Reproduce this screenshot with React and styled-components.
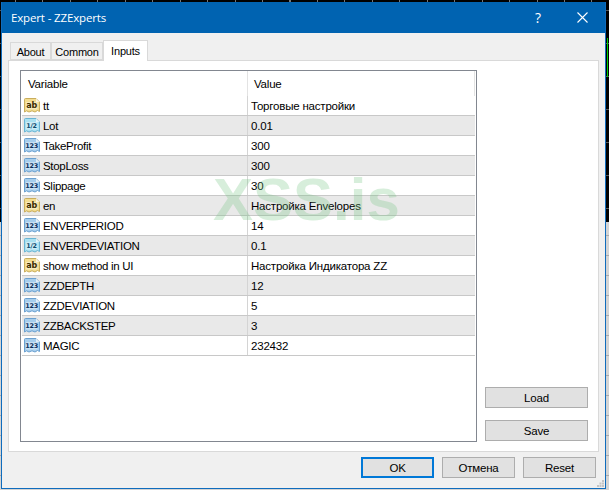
import React from 'react';
import styled, { createGlobalStyle } from 'styled-components';

const GlobalStyle = createGlobalStyle`
  html, body {
    margin: 0;
    padding: 0;
    background: #000;
  }
`;

const rows = [
  { type: 'ab', name: 'tt', value: 'Торговые настройки' },
  { type: 'half', name: 'Lot', value: '0.01' },
  { type: 'num', name: 'TakeProfit', value: '300' },
  { type: 'num', name: 'StopLoss', value: '300' },
  { type: 'num', name: 'Slippage', value: '30' },
  { type: 'ab', name: 'en', value: 'Настройка Envelopes' },
  { type: 'num', name: 'ENVERPERIOD', value: '14' },
  { type: 'half', name: 'ENVERDEVIATION', value: '0.1' },
  { type: 'ab', name: 'show method in UI', value: 'Настройка Индикатора ZZ' },
  { type: 'num', name: 'ZZDEPTH', value: '12' },
  { type: 'num', name: 'ZZDEVIATION', value: '5' },
  { type: 'num', name: 'ZZBACKSTEP', value: '3' },
  { type: 'num', name: 'MAGIC', value: '232432' }
];

const iconColors = {
  ab: { fill: '#f3dc8e', edge: '#c9ad5c', text: '#3a2c00', label: 'ab', size: 8 },
  half: { fill: '#a9e0f0', edge: '#68b4d4', text: '#0b4a6e', label: '1/2', size: 6.5 },
  num: { fill: '#a6cdec', edge: '#6aa0d0', text: '#0c2f5c', label: '123', size: 6.5 }
};

const TypeIcon = ({ type }) => {
  const c = iconColors[type];
  return (
    <IconSvg width="16" height="15" viewBox="0 0 16 15">
      <path
        d="M0.5 1.5 Q0.5 0.5 1.5 0.5 H12 L15.5 4 V13.5 L13.5 12.5 L11 14 L8 12.8 L5 14 L2.5 12.8 L0.5 14 Z"
        fill={c.fill}
        stroke={c.edge}
      />
      <path d="M12 0.5 V4 H15.5 Z" fill="#fff" opacity="0.7" />
      <rect x="2" y="4" width="11.5" height="7.5" fill="#fff" opacity="0.4" />
      <text
        x="7.6"
        y="10.4"
        textAnchor="middle"
        fontFamily="'DejaVu Sans', sans-serif"
        fontWeight="700"
        fontSize={c.size}
        fill={c.text}
      >
        {c.label}
      </text>
    </IconSvg>
  );
};

export default function App() {
  return (
    <Desktop>
      <GlobalStyle />
      <Window>
        <TitleBar>
          <Title>Expert - ZZExperts</Title>
          <HelpMark>?</HelpMark>
          <CloseIcon width="11" height="11" viewBox="0 0 11 11">
            <path d="M0.5 0.5 L10.5 10.5 M10.5 0.5 L0.5 10.5" stroke="#fff" strokeWidth="1.1" />
          </CloseIcon>
        </TitleBar>
        <Body>
          <Tabs>
            <Tab width={41}>About</Tab>
            <Tab width={52}>Common</Tab>
            <Tab width={45} active>
              Inputs
            </Tab>
          </Tabs>
          <Panel>
            <List>
              <Header>
                <HeaderCell>Variable</HeaderCell>
                <HeaderCell>Value</HeaderCell>
              </Header>
              {rows.map((row, i) => (
                <Row key={row.name} shaded={i % 2 === 1}>
                  <NameCell>
                    <TypeIcon type={row.type} />
                    {row.name}
                  </NameCell>
                  <ValueCell>{row.value}</ValueCell>
                </Row>
              ))}
            </List>
            <SideButtons>
              <Button>Load</Button>
              <Button>Save</Button>
            </SideButtons>
          </Panel>
          <Footer>
            <Button small primary>
              OK
            </Button>
            <Button small>Отмена</Button>
            <Button small>Reset</Button>
          </Footer>
        </Body>
        <Grip width="7" height="7" viewBox="0 0 7 7">
          <path d="M5 0h2v2H5zM2.5 2.5h2v2h-2zM5 2.5h2v2H5zM0 5h2v2H0zM2.5 5h2v2h-2zM5 5h2v2H5z" fill="#c4c4c4" />
        </Grip>
        <Watermark>XSS.is</Watermark>
      </Window>
    </Desktop>
  );
}

const Desktop = styled.div`
  width: 609px;
  height: 490px;
  box-sizing: border-box;
  padding: 2px 3px 1px 1px;
  overflow: hidden;
  background:
    linear-gradient(#00d000, #00d000) 607px 38px / 1px 39px no-repeat,
    repeating-linear-gradient(90deg, #777 0 1px, transparent 1px 27.45px) 15px 0 / 100% 2px no-repeat,
    repeating-linear-gradient(#555 0 1px, transparent 1px 33px) 0 10px / 100% 212px no-repeat,
    repeating-linear-gradient(#aaa 0 1px, transparent 1px 20px) 0 235px / 100% 255px no-repeat,
    linear-gradient(#000 0 222px, #d4d4d4 222px);
`;

const Window = styled.div`
  position: relative;
  width: 605px;
  height: 487px;
  box-sizing: border-box;
  border: 1px solid #0f6cbd;
  border-top: 0;
  background: #f0f0f0;
  display: flex;
  flex-direction: column;
  font-family: 'Liberation Sans', Arial, sans-serif;
  font-size: 11.5px;
  color: #000;
`;

const TitleBar = styled.div`
  height: 31px;
  flex: none;
  background: #0063b1;
  color: #fff;
  display: flex;
  align-items: center;
  padding: 0 17px 0 9px;
`;

const Title = styled.div`
  flex: 1;
  font-family: 'Open Sans', sans-serif;
  font-size: 11.5px;
  letter-spacing: -0.15px;
`;

const HelpMark = styled.div`
  font-family: 'Open Sans', sans-serif;
  font-size: 14px;
  margin-right: 36px;
`;

const CloseIcon = styled.svg`
  display: block;
`;

const Body = styled.div`
  flex: 1;
  display: flex;
  flex-direction: column;
  padding: 7px 6px 0 6px;
`;

const Tabs = styled.div`
  display: flex;
  align-items: flex-end;
  height: 20px;
  padding-left: 2px;
  position: relative;
  z-index: 1;
`;

const Tab = styled.div`
  width: ${props => props.width}px;
  height: ${props => (props.active ? 21 : 18)}px;
  box-sizing: border-box;
  margin-bottom: ${props => (props.active ? -1 : 0)}px;
  border: 1px solid #d9d9d9;
  border-bottom: ${props => (props.active ? '0' : '1px solid #d9d9d9')};
  background: ${props => (props.active ? '#fff' : '#f0f0f0')};
  display: flex;
  align-items: center;
  justify-content: center;
  padding-top: ${props => (props.active ? 0 : 1)}px;
  padding-bottom: ${props => (props.active ? 1 : 0)}px;
  font-size: 11px;
  letter-spacing: -0.2px;
`;

const Panel = styled.div`
  height: 392px;
  flex: none;
  box-sizing: border-box;
  border: 1px solid #d9d9d9;
  background: #fff;
  display: flex;
  padding: 9px 10px 9px 11px;
  gap: 8px;
`;

const List = styled.div`
  width: 457px;
  flex: none;
  box-sizing: border-box;
  border: 1px solid #828790;
  padding: 0 1px;
`;

const Header = styled.div`
  display: grid;
  grid-template-columns: 226px 1fr;
  height: 25px;
`;

const HeaderCell = styled.div`
  display: flex;
  align-items: center;
  padding-left: 6px;
  padding-top: 1px;
  border-right: 1px solid #e3e3e3;
  letter-spacing: -0.2px;
`;

const Row = styled.div`
  display: grid;
  grid-template-columns: 226px 1fr;
  height: 20px;
  box-sizing: border-box;
  border-bottom: 1px solid #c8c8c8;
  background: ${props => (props.shaded ? '#e9e9e9' : '#fff')};
`;

const NameCell = styled.div`
  display: flex;
  align-items: center;
  gap: 3px;
  padding-left: 2px;
  border-right: 1px solid #d4d4d4;
  white-space: nowrap;
  letter-spacing: -0.3px;
`;

const IconSvg = styled.svg`
  flex: none;
  display: block;
`;

const ValueCell = styled.div`
  display: flex;
  align-items: center;
  padding-left: 3px;
  letter-spacing: -0.2px;
`;

const SideButtons = styled.div`
  display: flex;
  flex-direction: column;
  justify-content: flex-end;
  gap: 12px;
  padding-bottom: 1px;
`;

const Button = styled.div`
  width: ${props => (props.small ? 73 : 103)}px;
  height: 21px;
  box-sizing: border-box;
  background: #e1e1e1;
  border: ${props => (props.primary ? '2px solid #0078d7' : '1px solid #adadad')};
  display: flex;
  align-items: center;
  justify-content: center;
  letter-spacing: -0.2px;
`;

const Footer = styled.div`
  display: flex;
  justify-content: flex-end;
  gap: 8px;
  padding: 5px 3px 0 0;
`;

const Grip = styled.svg`
  position: absolute;
  right: 1px;
  bottom: 1px;
`;

const Watermark = styled.div`
  position: absolute;
  left: 211px;
  top: 164px;
  font-family: 'Liberation Sans', Arial, sans-serif;
  font-weight: 700;
  font-size: 60px;
  line-height: 68px;
  color: rgba(110, 195, 125, 0.28);
  pointer-events: none;
`;
